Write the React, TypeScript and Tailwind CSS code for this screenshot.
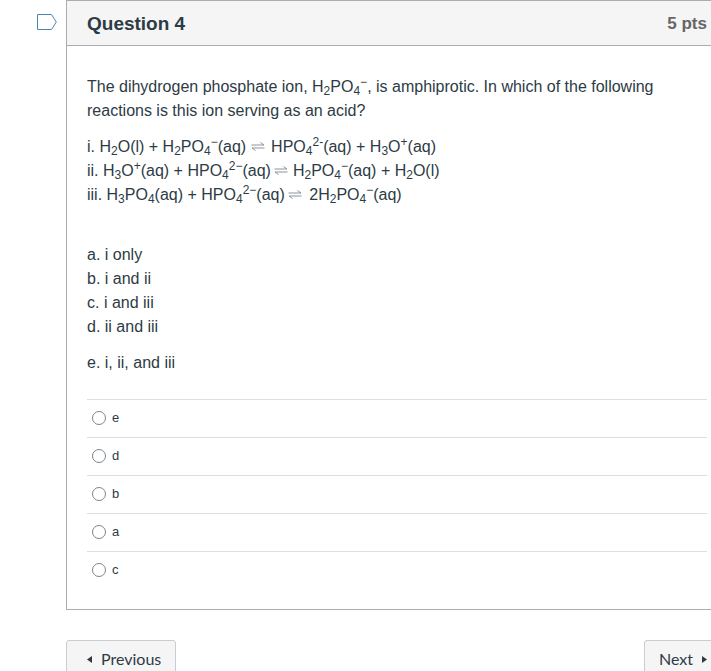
const SANS = "font-['Liberation_Sans',Arial,sans-serif]"

function Equilibrium({ className }: { className: string }) {
  return (
    <svg width="14" height="9" viewBox="0 0 14 9" className={`inline-block align-[1px] ${className}`} fill="none" stroke="#8b959b" strokeWidth="1">
      <path d="M0.5 3 H13 L9.5 0.5" />
      <path d="M13.5 6 H1 L4.5 8.5" />
    </svg>
  )
}

function Sub({ children }: { children: React.ReactNode }) {
  return <sub className="text-[12px]">{children}</sub>
}

function Sup({ children }: { children: React.ReactNode }) {
  return <sup className="text-[12px]">{children}</sup>
}

function H2PO4() {
  return (
    <>
      H<Sub>2</Sub>PO<Sub>4</Sub>
      <Sup>−</Sup>
    </>
  )
}

function HPO4() {
  return (
    <>
      HPO<Sub>4</Sub>
      <Sup>2−</Sup>
    </>
  )
}

const CHOICES = ['e', 'd', 'b', 'a', 'c']

function Choice({ label }: { label: string }) {
  return (
    <div className="flex items-center h-[38px] pl-[5px] pb-[2px] border-t border-[#dcdfe1]">
      <span className="w-[14px] h-[14px] rounded-full border border-[#7b858c] bg-white shrink-0" />
      <span className="ml-[6px] text-[13px] leading-none -mt-[1px]">{label}</span>
    </div>
  )
}

export default function App() {
  return (
    <div className={`w-[711px] h-[671px] overflow-hidden bg-white text-[#2d3b45] ${SANS}`}>
      <div className="flex w-[720px]">
        <div className="w-[66px] shrink-0 pt-[14px] pl-[37px]">
          <svg width="20" height="16" viewBox="0 0 20 16" fill="none" stroke="#4a86ad" strokeWidth="1">
            <path d="M0.5 0.5 H14.5 L19.3 8 L14.5 15.5 H0.5 Z" />
          </svg>
        </div>
        <div className="w-[654px] shrink-0 border border-[#a9adb0]">
          <div className="flex items-center justify-between h-[45px] pt-[2px] bg-[#f5f5f5] border-b border-[#a9adb0] pl-[20px] pr-[12px]">
            <span className="text-[19px] font-bold">Question 4</span>
            <span className="text-[17px] font-bold text-[#666666]">5 pts</span>
          </div>
          <div className="pt-[29px] pl-[20px] pr-[12px] text-[16px] leading-[24px]">
            <p>
              The dihydrogen phosphate ion, H<Sub>2</Sub>PO<Sub>4</Sub>
              <Sup>−</Sup>, is amphiprotic. In which of the following
              <br />
              reactions is this ion serving as an acid?
            </p>
            <div className="mt-[12px]">
              <p>
                i. H<Sub>2</Sub>O(l) + <H2PO4 />(aq)
                <Equilibrium className="ml-[5px] mr-[6px]" />
                HPO<Sub>4</Sub>
                <Sup>2-</Sup>(aq) + H<Sub>3</Sub>O<Sup>+</Sup>(aq)
              </p>
              <p>
                ii. H<Sub>3</Sub>O<Sup>+</Sup>(aq) + <HPO4 />(aq)
                <Equilibrium className="ml-[3px] mr-[5px]" />
                <H2PO4 />(aq) + H<Sub>2</Sub>O(l)
              </p>
              <p>
                iii. H<Sub>3</Sub>PO<Sub>4</Sub>(aq) + <HPO4 />(aq)
                <Equilibrium className="ml-[3px] mr-[3px]" />
                &nbsp;2<H2PO4 />(aq)
              </p>
            </div>
            <div className="mt-[36px]">
              <p>a. i only</p>
              <p>b. i and ii</p>
              <p>c. i and iii</p>
              <p>d. ii and iii</p>
              <p className="mt-[12px]">e. i, ii, and iii</p>
            </div>
            <div className="mt-[24px]">
              {CHOICES.map((c) => (
                <Choice key={c} label={c} />
              ))}
            </div>
            <div className="h-[20px]" />
          </div>
        </div>
      </div>
      <div className="flex justify-between w-[720px] pl-[66px] mt-[30px] font-['Lato',sans-serif] text-[16px]">
        <button className="flex items-center w-[110px] h-[40px] pl-[20px] pb-[2px] bg-[#f5f5f5] border border-[#c7cdd1] rounded-[3px] text-[#2d3b45]">
          <svg width="5" height="7" viewBox="0 0 5 7" className="mr-[9px]" fill="#2d3b45">
            <path d="M5 0 V7 L0 3.5 Z" />
          </svg>
          Previous
        </button>
        <button className="flex items-center w-[76px] h-[40px] pl-[14px] pb-[2px] bg-[#f5f5f5] border border-[#c7cdd1] rounded-[3px] text-[#2d3b45]">
          Next
          <svg width="5" height="7" viewBox="0 0 5 7" className="ml-[9px]" fill="#2d3b45">
            <path d="M0 0 V7 L5 3.5 Z" />
          </svg>
        </button>
      </div>
    </div>
  )
}
